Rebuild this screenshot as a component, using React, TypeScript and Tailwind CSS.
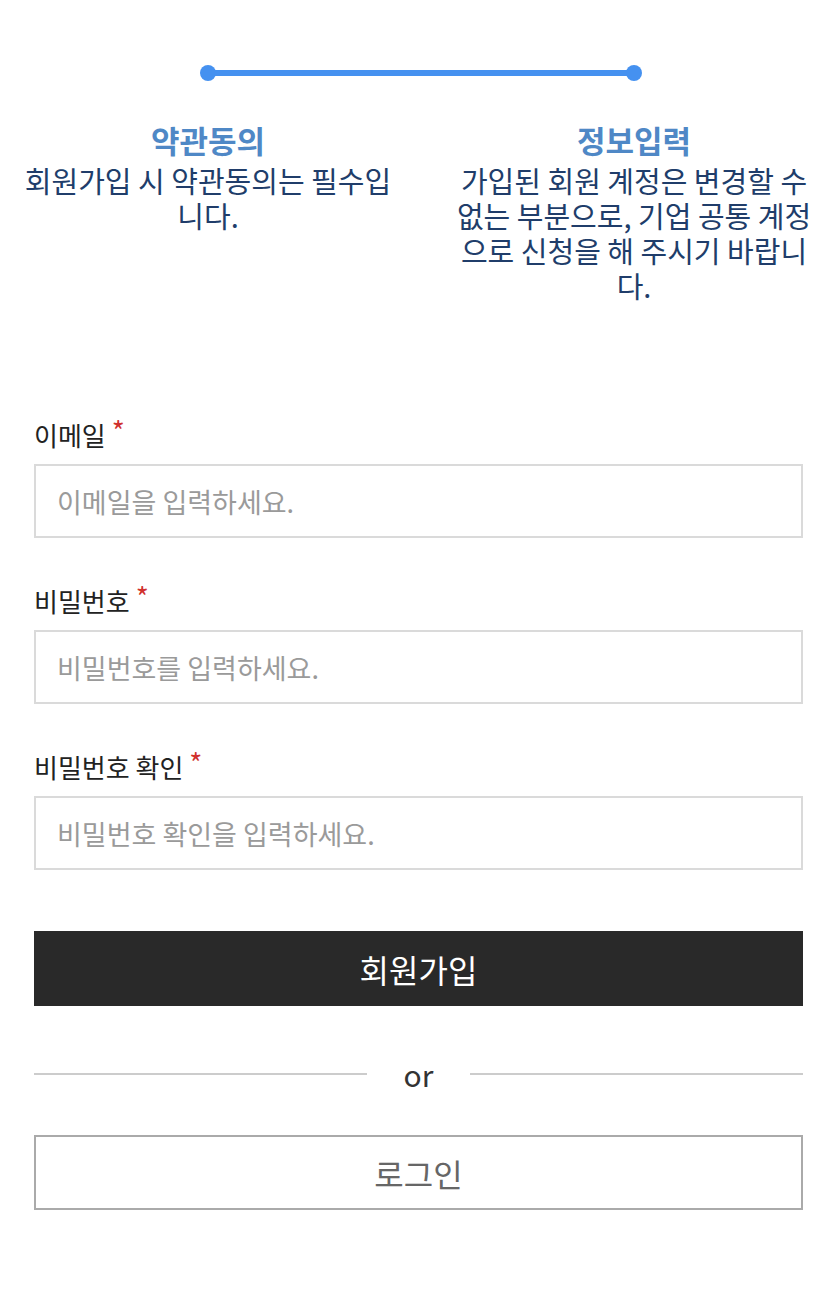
import type { ReactNode } from "react";

const font = "font-['Noto_Sans_CJK_KR','Noto_Sans',sans-serif]";

function StepColumn({ title, children }: { title: string; children: ReactNode }) {
  return (
    <div className="w-[372px] text-center">
      <h2 className="text-[31px] leading-[46px] font-bold text-[#4f88c6]">{title}</h2>
      <p className="text-[29px] leading-[35px] text-[#203d6a]">{children}</p>
    </div>
  );
}

function Field({ label, placeholder, type = "text" }: { label: string; placeholder: string; type?: string }) {
  return (
    <div className="flex flex-col">
      <label className="mb-[14px] flex h-[30px] items-start text-[26px] leading-[30px] text-[#222]">
        <span>{label}</span>
        <span className="ml-[6px] text-[28px] leading-[20px] text-[#d0312d]">*</span>
      </label>
      <input
        type={type}
        placeholder={placeholder}
        className="h-[74px] w-full border-2 border-[#dadada] bg-white px-[21px] text-[27px] text-[#222] outline-none placeholder:text-[#9a9a9a]"
      />
    </div>
  );
}

export default function App() {
  return (
    <div className={`${font} min-h-[1310px] w-[840px] bg-white pt-[65px]`}>
      {/* step progress */}
      <div className="ml-[200px] flex w-[442px] items-center">
        <span className="h-4 w-4 rounded-full bg-[#4591f0]" />
        <span className="-mx-1 h-[6px] flex-1 bg-[#4591f0]" />
        <span className="h-4 w-4 rounded-full bg-[#4591f0]" />
      </div>

      <div className="mt-[36px] ml-[22px] flex gap-[54px]">
        <StepColumn title="약관동의">회원가입 시 약관동의는 필수입니다.</StepColumn>
        <StepColumn title="정보입력">
          가입된 회원 계정은 변경할 수 없는 부분으로, 기업 공통 계정으로 신청을 해 주시기 바랍니다.
        </StepColumn>
      </div>

      <form className="mt-[117px] flex flex-col gap-[48px] pl-[34px] pr-[37px]" onSubmit={(e) => e.preventDefault()}>
        <Field label="이메일" placeholder="이메일을 입력하세요." type="email" />
        <Field label="비밀번호" placeholder="비밀번호를 입력하세요." type="password" />
        <Field label="비밀번호 확인" placeholder="비밀번호 확인을 입력하세요." type="password" />
      </form>

      <div className="mt-[61px] pl-[34px] pr-[37px]">
        <button className="h-[75px] w-full bg-[#292929] text-[32px] text-white">회원가입</button>

        <div className="mt-[48px] flex items-center">
          <span className="h-[2px] flex-1 bg-[#cccccc]" />
          <span className="px-[37px] text-[30px] leading-[40px] text-[#333]">or</span>
          <span className="h-[2px] flex-1 bg-[#cccccc]" />
        </div>

        <button className="mt-[41px] h-[75px] w-full border-2 border-[#aaaaaa] bg-white text-[32px] text-[#666]">
          로그인
        </button>
      </div>
    </div>
  );
}
